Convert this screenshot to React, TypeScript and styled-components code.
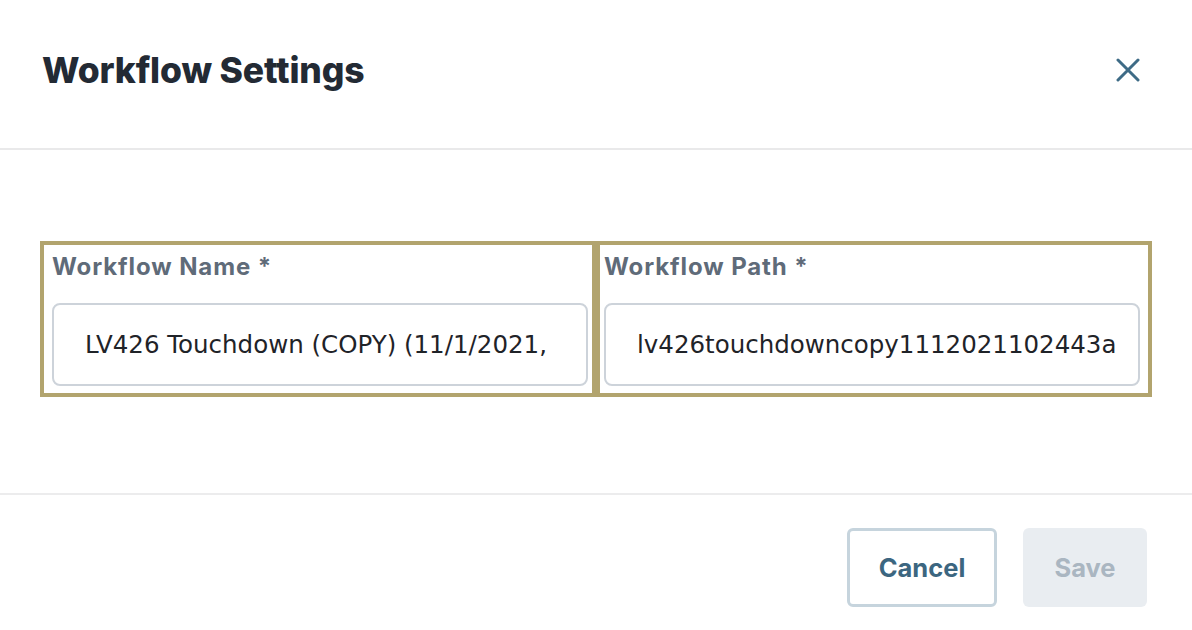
import styled, { createGlobalStyle } from "styled-components";

const GlobalStyle = createGlobalStyle`
  * {
    box-sizing: border-box;
  }
  body {
    margin: 0;
    background: #fff;
    font-family: Inter, "Liberation Sans", sans-serif;
  }
`;

const Dialog = styled.div`
  width: 1192px;
  height: 630px;
  overflow: hidden;
  background: #fff;
`;

const Header = styled.div`
  display: flex;
  align-items: center;
  justify-content: space-between;
  height: 150px;
  padding: 0 52px 8px 42px;
  border-bottom: 2px solid #e9e9ea;
`;

const Title = styled.h1`
  margin: 0;
  font-size: 35.5px;
  font-weight: 800;
  letter-spacing: -0.15px;
  color: #232a34;
`;

const CloseButton = styled.button`
  display: flex;
  align-items: center;
  justify-content: center;
  width: 24px;
  height: 24px;
  padding: 0;
  border: 0;
  background: none;
  cursor: pointer;
`;

const Body = styled.div`
  padding: 91px 40px 96px;
`;

const Fields = styled.div`
  display: grid;
  grid-template-columns: 1fr 1fr;
`;

const Field = styled.label<{ $side: "left" | "right" }>`
  display: flex;
  flex-direction: column;
  height: 156px;
  border: 4px solid #b2a46e;
  padding: ${(p) => (p.$side === "left" ? "8px 4px 7px 8px" : "8px 8px 7px 4px")};
`;

const Label = styled.span`
  font-size: 24px;
  font-weight: 700;
  letter-spacing: 0.9px;
  line-height: 28px;
  color: #5f6b79;
`;

// wraps like the original field; a line as tall as the box keeps only the first line in view
const TextBox = styled.textarea`
  margin-top: auto;
  width: 100%;
  height: 83px;
  padding: 0 4px 0 31px;
  border: 2px solid #cdd3da;
  border-radius: 8px;
  font-family: "DejaVu Sans", "Liberation Sans", sans-serif;
  font-size: 24.5px;
  line-height: 79px;
  color: #1f2328;
  background: #fff;
  outline: none;
  resize: none;
  overflow: hidden;
`;

const Footer = styled.div`
  display: flex;
  justify-content: flex-end;
  gap: 26px;
  padding: 33px 45px 0;
  border-top: 2px solid #ececed;
`;

const Button = styled.button<{ $variant: "outline" | "disabled" }>`
  height: 79px;
  padding: 0;
  border-radius: 6px;
  font-family: Inter, "Liberation Sans", sans-serif;
  font-size: 25.5px;
  font-weight: 700;
  width: ${(p) => (p.$variant === "outline" ? "150px" : "124px")};
  border: ${(p) => (p.$variant === "outline" ? "3px solid #c6d4dd" : "0")};
  background: ${(p) => (p.$variant === "outline" ? "#fff" : "#e9edf1")};
  color: ${(p) => (p.$variant === "outline" ? "#3c6680" : "#aab6c1")};
`;

const App = () => {
  return (
    <Dialog>
      <GlobalStyle />
      <Header>
        <Title>Workflow Settings</Title>
        <CloseButton aria-label="Close">
          <svg width="24" height="24" viewBox="0 0 24 24" fill="none">
            <path
              d="M2 2L22 22M22 2L2 22"
              stroke="#3e6b86"
              strokeWidth="3"
              strokeLinecap="round"
            />
          </svg>
        </CloseButton>
      </Header>
      <Body>
        <Fields>
          <Field $side="left">
            <Label>Workflow Name *</Label>
            <TextBox
              rows={1}
              defaultValue="LV426 Touchdown (COPY) (11/1/2021, 10:24:43 AM)"
            />
          </Field>
          <Field $side="right">
            <Label>Workflow Path *</Label>
            <TextBox rows={1} defaultValue="lv426touchdowncopy1112021102443a" />
          </Field>
        </Fields>
      </Body>
      <Footer>
        <Button $variant="outline">Cancel</Button>
        <Button $variant="disabled" disabled>
          Save
        </Button>
      </Footer>
    </Dialog>
  );
};

export default App;
